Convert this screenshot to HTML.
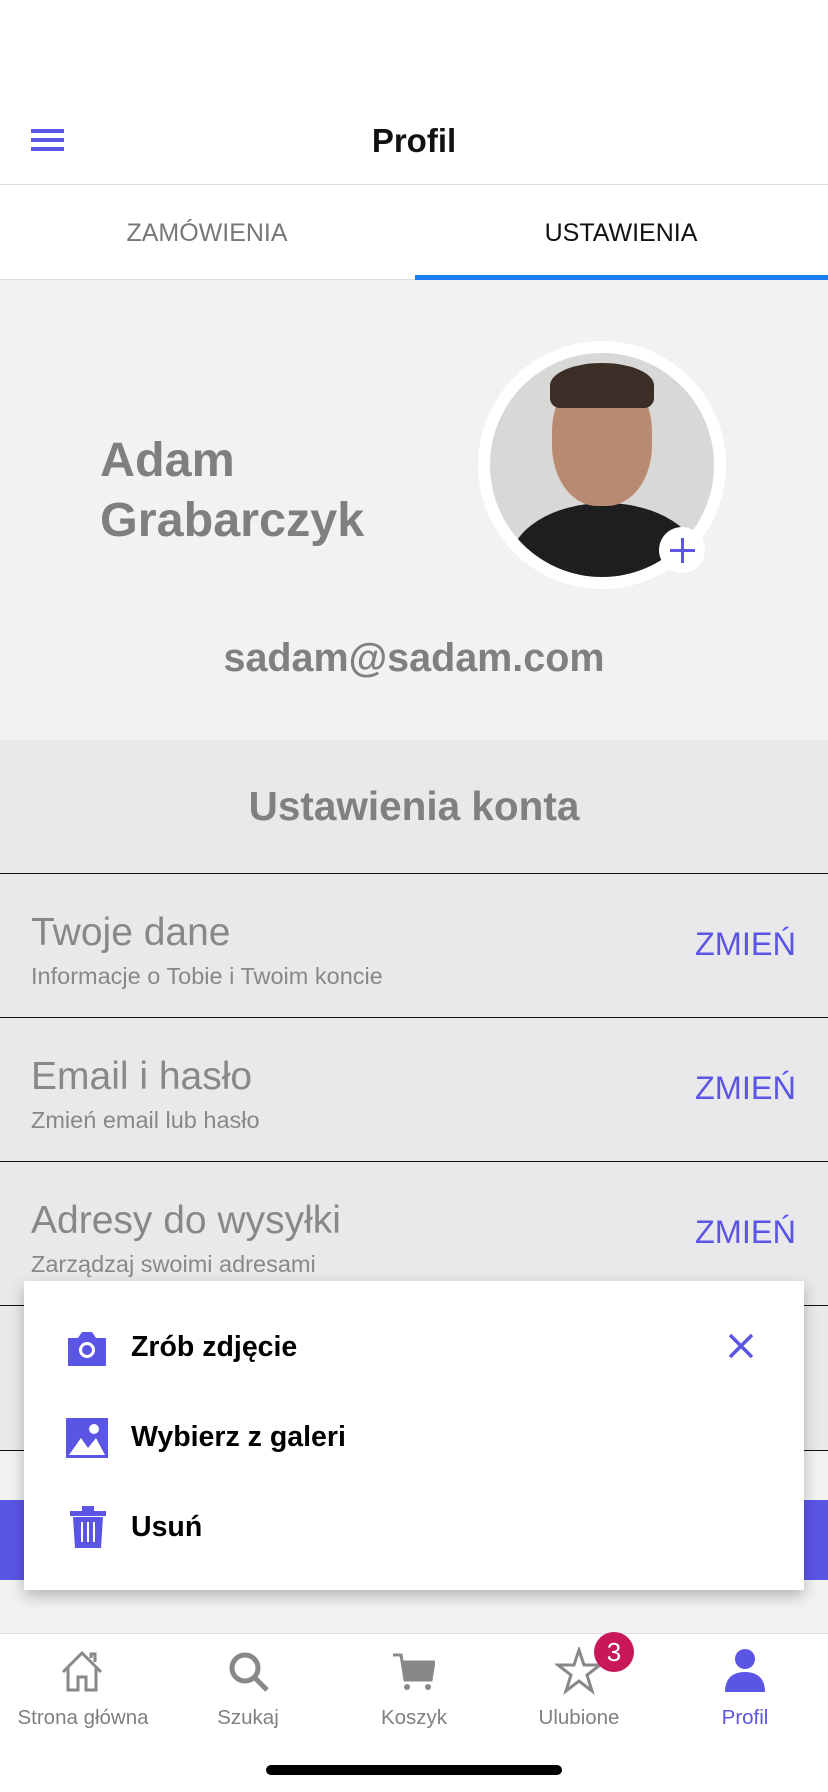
<!DOCTYPE html>
<html><head><meta charset="utf-8"><style>
*{margin:0;padding:0;box-sizing:border-box}
body{width:828px;height:1792px;position:relative;overflow:hidden;background:#f2f2f2;font-family:"Liberation Sans",sans-serif}
.a{position:absolute}
.row{position:absolute;left:0;width:828px;height:145px;background:#e9e9eb;border-top:1px solid #111}
.row .t{position:absolute;left:31px;top:37px;font-size:39px;color:#888}
.row .s{position:absolute;left:31px;top:89px;font-size:23.5px;color:#888}
.row .z{position:absolute;right:32px;top:52px;font-size:32.5px;color:#5b55e6}
.lab{position:absolute;top:1706px;width:166px;text-align:center;font-size:20.5px;color:#808080}
</style></head><body>
<div class="a" style="left:0;top:0;width:828px;height:280px;background:#fff"></div>
<div class="a" style="left:31px;top:129px;width:33px;height:4px;background:#5b55e6"></div>
<div class="a" style="left:31px;top:138px;width:33px;height:4px;background:#5b55e6"></div>
<div class="a" style="left:31px;top:147px;width:33px;height:4px;background:#5b55e6"></div>
<div class="a" style="left:0;width:828px;top:122px;text-align:center;font-size:33px;font-weight:bold;color:#111">Profil</div>
<div class="a" style="left:0;top:184px;width:828px;height:1px;background:#ddd"></div>
<div class="a" style="left:0;width:414px;top:219px;text-align:center;font-size:25px;color:#777">ZAMÓWIENIA</div>
<div class="a" style="left:414px;width:414px;top:219px;text-align:center;font-size:25px;color:#111">USTAWIENIA</div>
<div class="a" style="left:0;top:279px;width:828px;height:1px;background:#ddd"></div>
<div class="a" style="left:415px;top:275px;width:413px;height:5px;background:#1a7cf0"></div>
<div class="a" style="left:100px;top:430px;font-size:48.5px;font-weight:bold;color:#7f7f7f;line-height:60px">Adam<br>Grabarczyk</div>
<div class="a" style="left:478px;top:341px;width:248px;height:248px;border-radius:50%;background:#fff"></div>
<div class="a" style="left:490px;top:353px;width:224px;height:224px;border-radius:50%;overflow:hidden;background:#d8d8d6">
<div class="a" style="left:20px;top:150px;width:190px;height:120px;border-radius:50% 50% 0 0;background:#1d1e20"></div>
<div class="a" style="left:62px;top:18px;width:100px;height:135px;border-radius:45%;background:#b98a72"></div>
<div class="a" style="left:60px;top:10px;width:104px;height:45px;border-radius:50% 50% 10px 10px;background:#3b2e27"></div>
</div>
<div class="a" style="left:659px;top:527px;width:46px;height:46px;border-radius:50%;background:#fff"></div>
<div class="a" style="left:670px;top:549px;width:25px;height:3px;background:#5b55e6"></div>
<div class="a" style="left:681px;top:538px;width:3px;height:25px;background:#5b55e6"></div>
<div class="a" style="left:0;width:828px;top:636px;text-align:center;font-size:39.5px;font-weight:bold;color:#808080">sadam@sadam.com</div>
<div class="a" style="left:0;top:740px;width:828px;height:133px;background:#e9e9eb"></div>
<div class="a" style="left:0;width:828px;top:783px;text-align:center;font-size:40.5px;font-weight:bold;color:#808080">Ustawienia konta</div>
<div class="row" style="top:873px"><div class="t">Twoje dane</div><div class="s">Informacje o Tobie i Twoim koncie</div><div class="z">ZMIEŃ</div></div>
<div class="row" style="top:1017px"><div class="t">Email i hasło</div><div class="s">Zmień email lub hasło</div><div class="z">ZMIEŃ</div></div>
<div class="row" style="top:1161px"><div class="t">Adresy do wysyłki</div><div class="s">Zarządzaj swoimi adresami</div><div class="z">ZMIEŃ</div></div>
<div class="row" style="top:1305px"></div>
<div class="a" style="left:0;top:1450px;width:828px;height:1px;background:#111"></div>
<div class="a" style="left:0;top:1500px;width:828px;height:80px;background:#5b55e6"></div>
<div class="a" style="left:24px;top:1281px;width:780px;height:309px;background:#fff;box-shadow:0 6px 14px rgba(0,0,0,.25)"></div>
<svg class="a" style="left:66px;top:1328px" width="42" height="40" viewBox="0 0 42 40"><path d="M2 10h10l4-6h10l4 6h10v28H2z" fill="#5b55e6"/><circle cx="21" cy="22" r="8" fill="#fff"/><circle cx="21" cy="22" r="5" fill="#5b55e6"/></svg>
<div class="a" style="left:131px;top:1331px;font-size:28.5px;font-weight:bold;color:#000">Zrób zdjęcie</div>
<svg class="a" style="left:727px;top:1332px" width="28" height="28" viewBox="0 0 28 28"><path d="M3 3L25 25M25 3L3 25" stroke="#5b55e6" stroke-width="3.5"/></svg>
<svg class="a" style="left:66px;top:1418px" width="42" height="40" viewBox="0 0 42 40"><rect x="0" y="0" width="42" height="40" fill="#5b55e6"/><circle cx="28" cy="11" r="5" fill="#fff"/><path d="M3 37L15 20L22 30L30 20L39 37Z" fill="#fff"/></svg>
<div class="a" style="left:131px;top:1421px;font-size:28.5px;font-weight:bold;color:#000">Wybierz z galeri</div>
<svg class="a" style="left:70px;top:1506px" width="36" height="42" viewBox="0 0 36 42"><rect x="0" y="5" width="36" height="5" fill="#5b55e6"/><rect x="12" y="0" width="12" height="6" fill="#5b55e6"/><path d="M3 11h30l-2 31H5z" fill="#5b55e6"/><path d="M12 16v20M18 16v20M24 16v20" stroke="#fff" stroke-width="2"/></svg>
<div class="a" style="left:131px;top:1511px;font-size:28.5px;font-weight:bold;color:#000">Usuń</div>
<div class="a" style="left:0;top:1633px;width:828px;height:159px;background:#fff;border-top:1px solid #ddd"></div>
<svg class="a" style="left:59px;top:1650px" width="46" height="42" viewBox="0 0 46 42"><path d="M4 22L23 3L42 22M9 18V40H19V27H27V40H37V18M32 8V4h4v8" fill="none" stroke="#888" stroke-width="3"/></svg>
<svg class="a" style="left:227px;top:1650px" width="44" height="44" viewBox="0 0 44 44"><circle cx="18" cy="18" r="13" fill="none" stroke="#888" stroke-width="5"/><path d="M27 27L40 40" stroke="#888" stroke-width="5"/></svg>
<svg class="a" style="left:391px;top:1652px" width="44" height="40" viewBox="0 0 44 40"><path d="M2 3H10L14 28H40L43 10H11" fill="none" stroke="#888" stroke-width="3"/><path d="M12 10H43L40 28H14Z" fill="#888"/><circle cx="16" cy="35" r="3" fill="#888"/><circle cx="37" cy="35" r="3" fill="#888"/></svg>
<svg class="a" style="left:555px;top:1647px" width="48" height="48" viewBox="0 0 48 48"><path d="M24 3L29 18H45L32 28L37 44L24 34L11 44L16 28L3 18H19Z" fill="none" stroke="#888" stroke-width="3"/></svg>
<div class="a" style="left:594px;top:1632px;width:40px;height:40px;border-radius:50%;background:#c8185a;color:#fff;font-size:26px;text-align:center;line-height:40px">3</div>
<svg class="a" style="left:723px;top:1648px" width="44" height="44" viewBox="0 0 44 44"><circle cx="22" cy="11" r="10" fill="#5b55e6"/><path d="M2 44C2 30 10 24 22 24S42 30 42 44Z" fill="#5b55e6"/></svg>
<div class="lab" style="left:0">Strona główna</div>
<div class="lab" style="left:165px">Szukaj</div>
<div class="lab" style="left:331px">Koszyk</div>
<div class="lab" style="left:496px">Ulubione</div>
<div class="lab" style="left:662px;color:#5b55e6">Profil</div>
<div class="a" style="left:266px;top:1765px;width:296px;height:10px;border-radius:5px;background:#000"></div>
</body></html>
